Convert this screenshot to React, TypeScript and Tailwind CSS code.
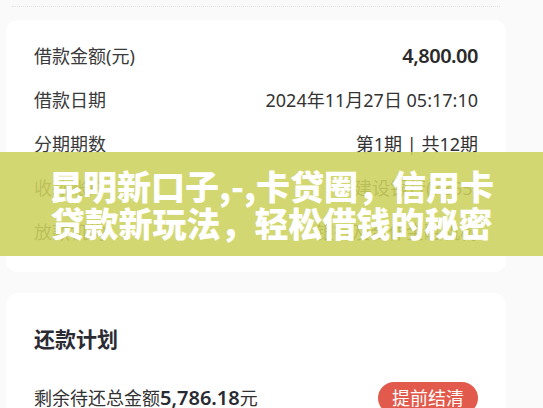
const rows = [
  { label: "借款金额(元)", value: "4,800.00", strong: true },
  { label: "借款日期", value: "2024年11月27日 05:17:10" },
  { label: "分期期数", value: "第1期 | 共12期" },
  { label: "收款账户", value: "建设银行(7855)" },
  { label: "放款机构", value: "银行及合作金融机构" },
];

export default function App() {
  return (
    <div
      className="relative w-[543px] h-[408px] overflow-hidden bg-[#fafafa] text-[#333]"
      style={{ fontFamily: '"Noto Sans", "Noto Sans CJK SC", sans-serif' }}
    >
      <div className="pt-[6px] px-3">
        <div className="w-[488px] border-t border-dotted border-[#e2e2e2]" />
      </div>

      {/* loan detail card */}
      <div className="mt-[13px] mx-[6px] w-[500px] bg-white rounded-xl px-[28px] pt-[14px] pb-[18px]">
        {rows.map((r) => (
          <div key={r.label} className="h-[44px] flex items-center justify-between">
            <span className="text-[18px] text-[#3a3a3a]">{r.label}</span>
            <span
              className={
                r.strong
                  ? "text-[20px] font-semibold text-[#2a2a2a] tracking-tight"
                  : "text-[18px] text-[#333]"
              }
            >
              {r.value}
            </span>
          </div>
        ))}
      </div>

      {/* repayment plan card */}
      <div className="mt-[21px] mx-[6px] w-[500px] bg-white rounded-xl px-[28px] pt-[36px] pb-4">
        <div className="text-[21px] font-bold text-[#2b2b33] leading-none">还款计划</div>
        <div className="mt-[32px] flex items-center justify-between">
          <span className="text-[18px] text-[#333]">
            剩余待还总金额<span className="text-[20px] font-semibold text-[#2a2a33]">5,786.18</span>元
          </span>
          <button className="w-[100px] h-[32px] rounded-full bg-[#e25a4c] text-white text-[18px] flex items-center justify-center">
            提前结清
          </button>
        </div>
      </div>

      {/* overlay title band */}
      <div className="absolute left-0 right-0 top-[152px] h-[104px] bg-[rgba(205,210,95,0.88)] flex flex-col items-center justify-center">
        <div
          className="text-white text-[34px] font-black leading-[37px] text-center whitespace-nowrap"
          style={{ fontFamily: '"Noto Sans CJK SC", sans-serif' }}
        >
          <div>昆明新口子,-,卡贷圈，信用卡</div>
          <div>贷款新玩法，轻松借钱的秘密</div>
        </div>
      </div>
    </div>
  );
}
